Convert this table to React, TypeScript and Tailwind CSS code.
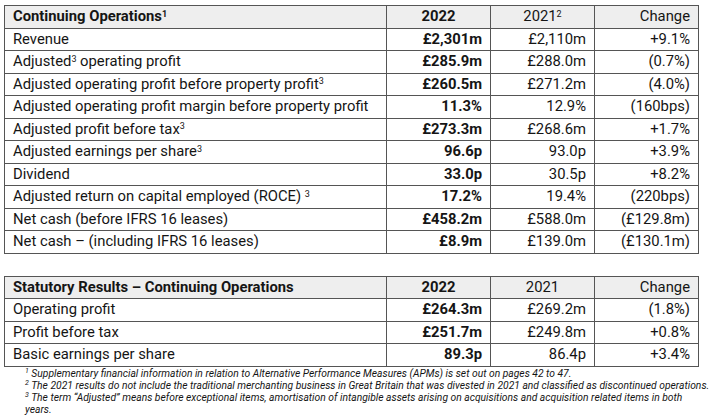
const main = [
  { label: <>Adjusted<sup className="text-[9px]">3</sup> operating profit</>, a: "£285.9m", b: "£288.0m", c: "(0.7%)" },
  { label: <>Adjusted operating profit before property profit<sup className="text-[9px]">3</sup></>, a: "£260.5m", b: "£271.2m", c: "(4.0%)" },
  { label: <>Adjusted operating profit margin before property profit</>, a: "11.3%", b: "12.9%", c: "(160bps)" },
  { label: <>Adjusted profit before tax<sup className="text-[9px]">3</sup></>, a: "£273.3m", b: "£268.6m", c: "+1.7%" },
  { label: <>Adjusted earnings per share<sup className="text-[9px]">3</sup></>, a: "96.6p", b: "93.0p", c: "+3.9%" },
  { label: <>Dividend</>, a: "33.0p", b: "30.5p", c: "+8.2%" },
  { label: <>Adjusted return on capital employed (ROCE) <sup className="text-[9px]">3</sup></>, a: "17.2%", b: "19.4%", c: "(220bps)" },
  { label: <>Net cash (before IFRS 16 leases)</>, a: "£458.2m", b: "£588.0m", c: "(£129.8m)" },
  { label: <>Net cash – (including IFRS 16 leases)</>, a: "£8.9m", b: "£139.0m", c: "(£130.1m)" },
];

const statutory = [
  { label: <>Operating profit</>, a: "£264.3m", b: "£269.2m", c: "(1.8%)" },
  { label: <>Profit before tax</>, a: "£251.7m", b: "£249.8m", c: "+0.8%" },
  { label: <>Basic earnings per share</>, a: "89.3p", b: "86.4p", c: "+3.4%" },
];

type Row = { label: React.ReactNode; a: string; b: string; c: string };

function Results({ title, year21, rows }: { title: React.ReactNode; year21: React.ReactNode; rows: Row[] }) {
  const cell = "border border-[#555] px-2 leading-none";
  return (
    <table className="table-fixed border-collapse w-[695px] text-[14.8px] text-[#151515]">
      <colgroup>
        <col className="w-[382px]" />
        <col className="w-[104px]" />
        <col className="w-[104px]" />
        <col className="w-[104px]" />
      </colgroup>
      <thead>
        <tr className="h-[22.5px] bg-[#eeeeee]">
          <th className={`${cell} text-left font-bold`}>{title}</th>
          <th className={`${cell} text-center font-bold`}>2022</th>
          <th className={`${cell} text-center font-normal`}>{year21}</th>
          <th className={`${cell} text-right font-normal`}>Change</th>
        </tr>
      </thead>
      <tbody>
        {rows.map((r, i) => (
          <tr key={i} className="h-[22.5px]">
            <td className={`${cell} text-left whitespace-nowrap`}>{r.label}</td>
            <td className={`${cell} text-right font-bold`}>{r.a}</td>
            <td className={`${cell} text-right`}>{r.b}</td>
            <td className={`${cell} text-right`}>{r.c}</td>
          </tr>
        ))}
      </tbody>
    </table>
  );
}

export default function App() {
  return (
    <div className="w-[720px] h-[418px] bg-white pt-[5px] pl-[4px] font-['Roboto',sans-serif]">
      <Results
        title={<>Continuing Operations<sup className="text-[9px]">1</sup></>}
        year21={<>2021<sup className="text-[9px]">2</sup></>}
        rows={[{ label: <>Revenue</>, a: "£2,301m", b: "£2,110m", c: "+9.1%" }, ...main]}
      />
      <div className="h-[22px]" />
      <Results title="Statutory Results – Continuing Operations" year21="2021" rows={statutory} />
      <div className="pl-[21px] pt-[1px] text-[10.3px] leading-[12px] italic text-[#151515] whitespace-nowrap">
        <p><sup className="text-[7px]">1</sup> Supplementary financial information in relation to Alternative Performance Measures (APMs) is set out on pages 42 to 47.</p>
        <p><sup className="text-[7px]">2</sup> The 2021 results do not include the traditional merchanting business in Great Britain that was divested in 2021 and classified as discontinued operations.</p>
        <p><sup className="text-[7px]">3</sup> The term “Adjusted” means before exceptional items, amortisation of intangible assets arising on acquisitions and acquisition related items in both</p>
        <p>years.</p>
      </div>
    </div>
  );
}
